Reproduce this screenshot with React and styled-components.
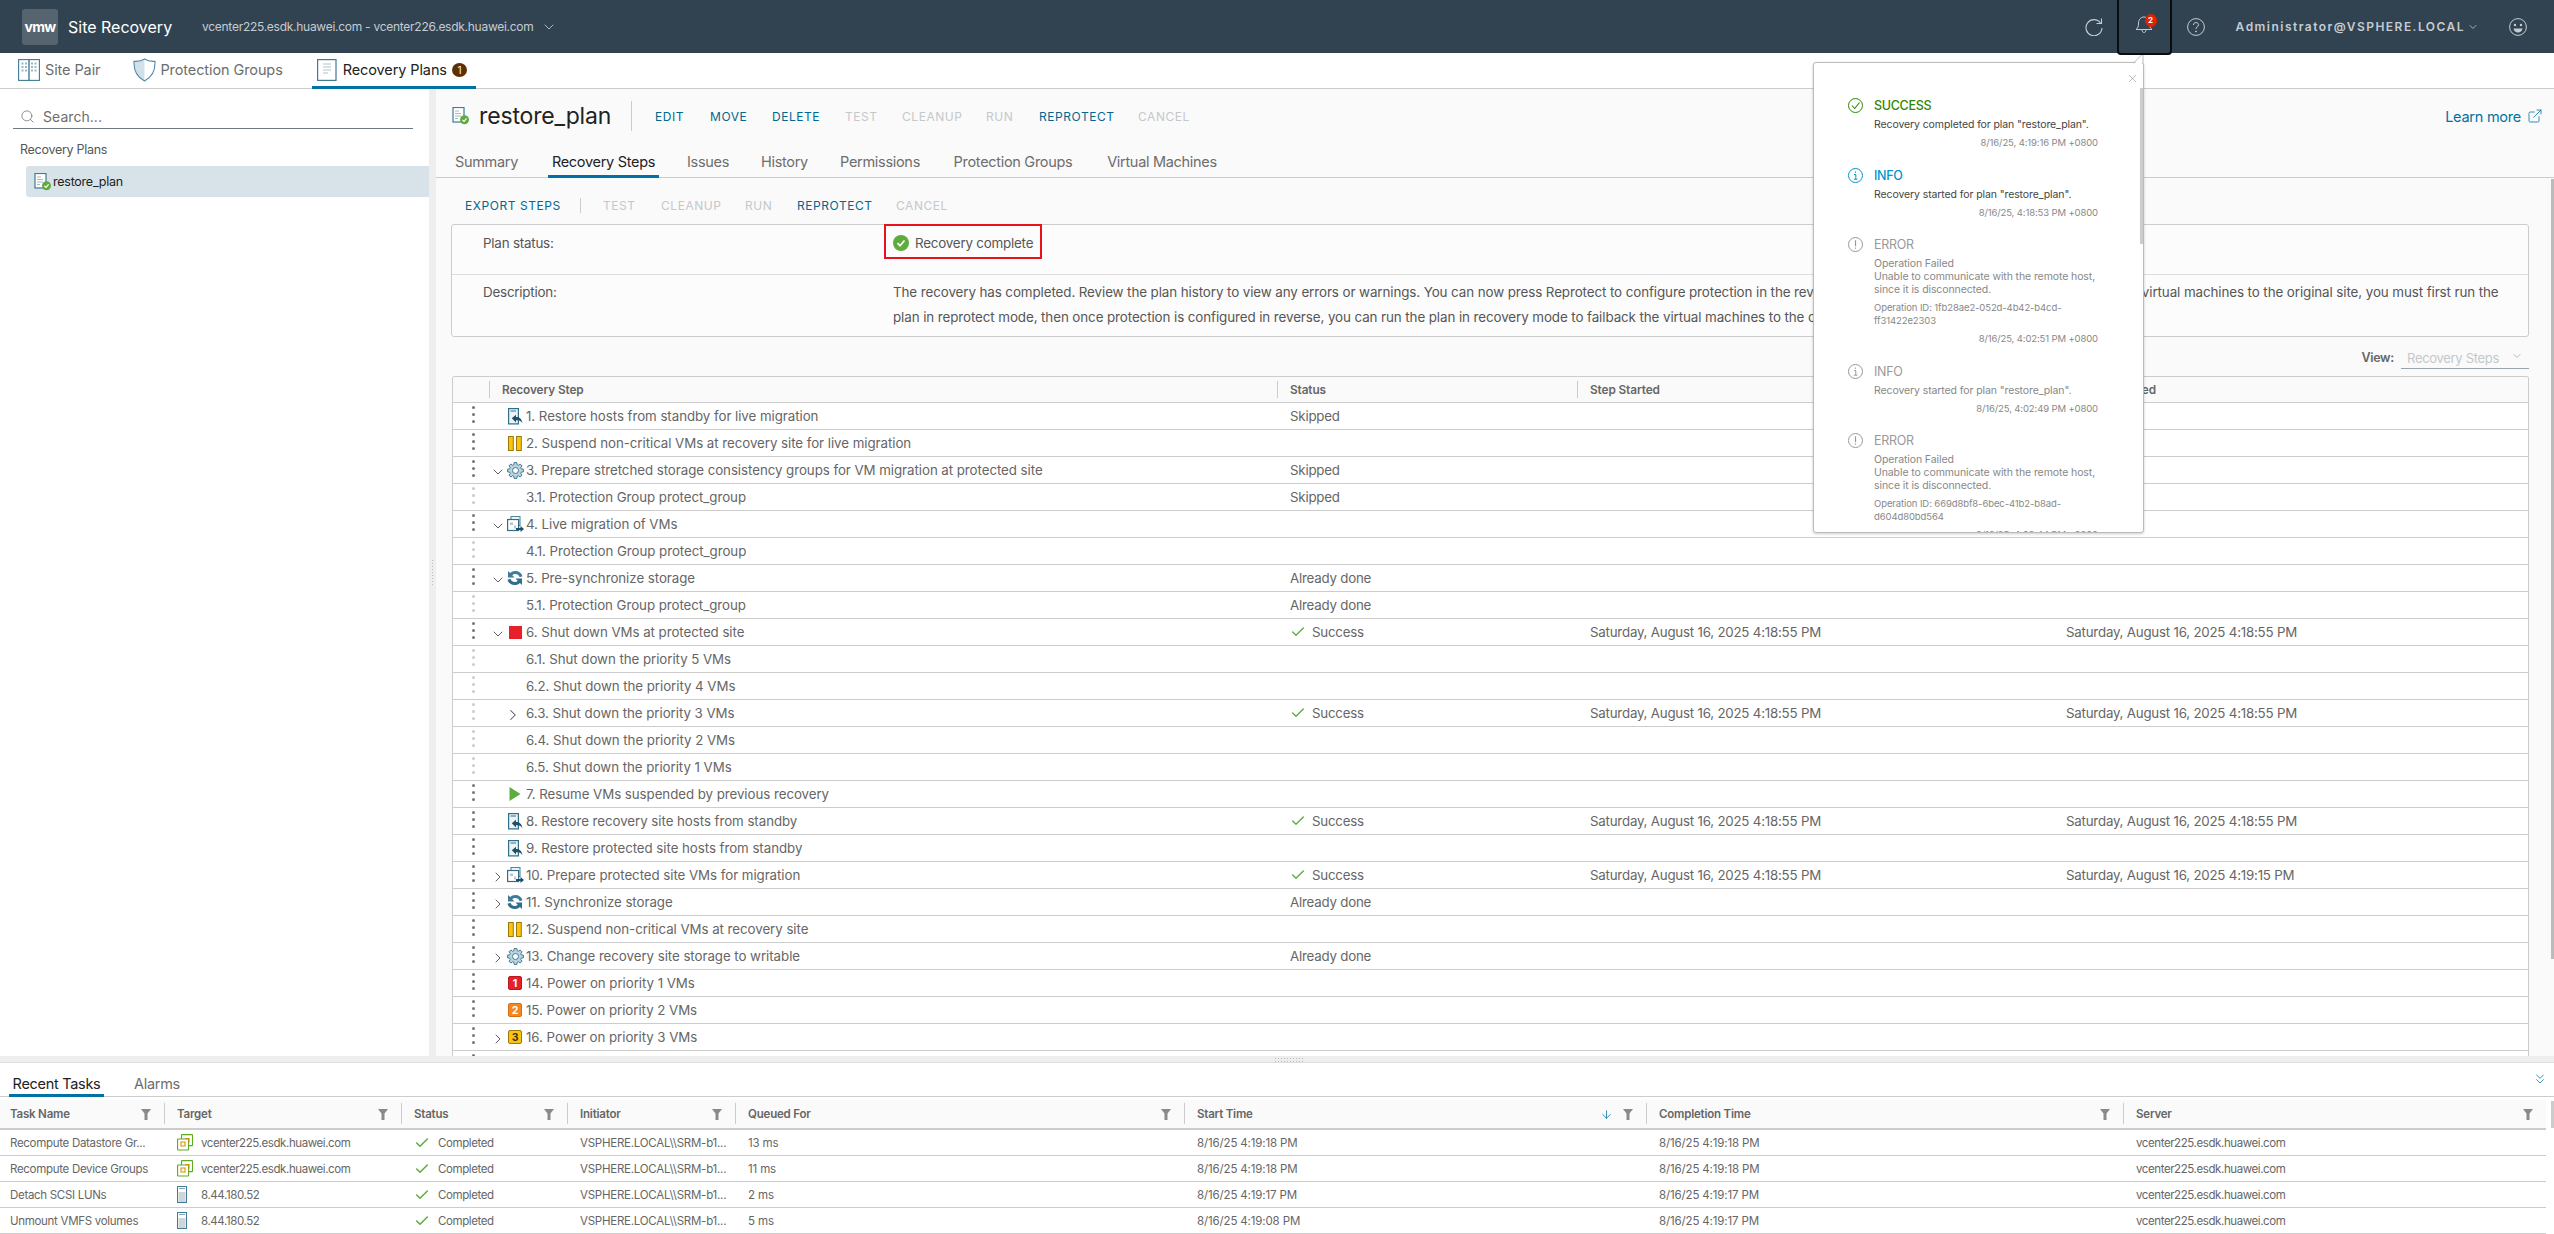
import React from 'react';
import styled, { createGlobalStyle } from 'styled-components';
import { ChevronDown, ChevronRight, Search, X, ExternalLink, Check, ArrowDown, ChevronsDown } from 'lucide-react';

const FONT = '"Inter", "Noto Sans", "Liberation Sans", sans-serif';

const Global = createGlobalStyle`
  html, body { margin: 0; padding: 0; background: #fff; }
  body { font-family: ${FONT}; color: #565656; }
  * { box-sizing: border-box; }
`;

const Page = styled.div`
  position: relative;
  width: 2554px;
  height: 1234px;
  display: flex;
  flex-direction: column;
  overflow: hidden;
  background: #fff;
`;

/* Header */
const Header = styled.header`
  height: 53px;
  flex: none;
  background: #314351;
  display: flex;
  align-items: center;
  padding-left: 22px;
`;
const Logo = styled.div`
  width: 36px;
  height: 36px;
  border-radius: 3px;
  background: #56646f;
  color: #fff;
  font-size: 14px;
  font-weight: 700;
  letter-spacing: -0.7px;
  display: flex;
  align-items: center;
  justify-content: center;
`;
const Brand = styled.div`
  margin-left: 10px;
  width: 107px;
  white-space: nowrap;
  color: #fff;
  font-size: 16px;
  letter-spacing: 0;
`;
const Context = styled.div`
  margin-left: 27px;
  color: #c5ccd1;
  font-size: 12px;
  letter-spacing: -0.27px;
  display: flex;
  align-items: center;
  gap: 7px;
`;
const HeaderRight = styled.div`
  margin-left: auto;
  display: flex;
  align-items: center;
  height: 100%;
`;
const HeaderIcon = styled.div`
  width: 18px;
  height: 18px;
  color: #c5ccd1;
  display: flex;
  margin-left: ${p => p.$ml || 0}px;
  margin-right: ${p => p.$mr || 0}px;
`;
const BellBox = styled.div`
  position: relative;
  z-index: 6;
  width: 55px;
  height: 57px;
  margin: -2px 0 -2px 14px;
  align-self: flex-start;
  border: 2px solid #0c0c0c;
  border-radius: 0 0 4px 4px;
  display: flex;
  justify-content: center;
  padding-top: 14px;
  color: #c5ccd1;
`;
const BellBadge = styled.span`
  position: absolute;
  left: 26px;
  top: 14px;
  width: 12px;
  height: 13px;
  border-radius: 50%;
  background: #e12200;
  color: #fff;
  font-size: 8px;
  font-weight: 700;
  line-height: 13px;
  text-align: center;
`;
const UserName = styled.div`
  margin-left: 31px;
  color: #c5ccd1;
  font-size: 12px;
  font-weight: 600;
  letter-spacing: 1.47px;
`;
const UserCaret = styled.div`
  margin-left: 2px;
  display: flex;
  color: #c5ccd1;
`;

/* Top nav */
const Nav = styled.nav`
  height: 36px;
  flex: none;
  display: flex;
  border-bottom: 1px solid #ccc;
  padding-left: 18px;
  align-items: stretch;
`;
const NavItem = styled.div`
  display: flex;
  align-items: center;
  gap: ${p => p.$gap || 5}px;
  height: 36px;
  margin-left: ${p => p.$ml || 0}px;
  padding: ${p => (p.$active ? '0 9px 0 5px' : '0')};
  font-size: 14.5px;
  white-space: nowrap;
  letter-spacing: -0.1px;
  color: ${p => (p.$active ? '#222' : '#6d6d6d')};
  border-bottom: 3px solid ${p => (p.$active ? '#0072a3' : 'transparent')};
`;
const CountBadge = styled.span`
  width: 15px;
  height: 14px;
  border-radius: 50%;
  background: #5d3006;
  color: #fff;
  font-size: 10px;
  line-height: 14px;
  text-align: center;
  margin-left: -1px;
`;

/* Work area */
const Work = styled.div`
  flex: 1;
  min-height: 0;
  display: flex;
`;
const Side = styled.aside`
  width: 429px;
  flex: none;
  padding-top: 17px;
`;
const SearchBox = styled.div`
  margin: 0 16px 0 13px;
  height: 23px;
  display: flex;
  align-items: center;
  gap: 8px;
  padding: 0 0 2px 7px;
  border-bottom: 1px solid #6f7a80;
  color: #6d6d6d;
  font-size: 14px;
  letter-spacing: 0.05px;
`;
const SideHeading = styled.div`
  margin: 13px 0 0 20px;
  font-size: 12.5px;
  letter-spacing: -0.28px;
  color: #565656;
  height: 15px;
  line-height: 15px;
`;
const SideRow = styled.div`
  margin: 9px 0 0 26px;
  height: 31px;
  background: #d8e3e9;
  border-radius: 3px 0 0 3px;
  display: flex;
  align-items: center;
  padding-left: 8px;
  gap: 1px;
  font-size: 12.5px;
  letter-spacing: -0.25px;
  color: #222;
`;
const Gutter = styled.div`
  width: 7px;
  flex: none;
  background: #eee;
  display: flex;
  align-items: center;
  justify-content: center;
`;
const GripV = styled.div`
  width: 3px;
  height: 28px;
  background-image: radial-gradient(#bbb 0.8px, transparent 0.9px);
  background-size: 3px 3px;
`;
const Main = styled.main`
  flex: 1;
  min-width: 0;
  background: #fafafa;
  position: relative;
  overflow: hidden;
  display: flex;
  flex-direction: column;
`;
const MainThumb = styled.div`
  position: absolute;
  right: 0;
  top: 90px;
  width: 3px;
  height: 780px;
  background: #bbb;
`;
const TitleRow = styled.div`
  height: 54px;
  flex: none;
  display: flex;
  align-items: center;
  padding-left: 16px;
`;
const Title = styled.h1`
  margin: 0 0 0 9px;
  width: 131px;
  white-space: nowrap;
  font-size: 23px;
  font-weight: 400;
  color: #222;
  letter-spacing: -0.15px;
`;
const Divider = styled.div`
  width: 1px;
  height: ${p => p.$h || 30}px;
  background: #ccc;
  margin: 0 ${p => p.$r || 23}px 0 ${p => p.$l || 21}px;
`;
const ActionBar = styled.div`
  display: flex;
  align-items: center;
`;
const Action = styled.span`
  font-size: 12px;
  font-weight: 400;
  letter-spacing: 0.55px;
  width: ${p => p.$w}px;
  white-space: nowrap;
  margin-right: ${p => p.$r}px;
  color: ${p => (p.$off ? '#c4c8ca' : '#00688f')};
`;
const LearnMore = styled.div`
  margin-left: auto;
  margin-right: 11px;
  display: flex;
  align-items: center;
  gap: 6px;
  color: #0072a3;
  font-size: 14.5px;
  letter-spacing: -0.25px;
`;
const Tabs = styled.div`
  height: 35px;
  flex: none;
  display: flex;
  border-bottom: 1px solid #ccc;
  padding-left: 19px;
`;
const Tab = styled.div`
  height: 35px;
  display: flex;
  align-items: center;
  justify-content: center;
  padding-top: 4px;
  width: ${p => p.$w}px;
  margin-right: ${p => p.$r}px;
  font-size: 14.5px;
  white-space: nowrap;
  letter-spacing: -0.3px;
  color: ${p => (p.$active ? '#222' : '#6d6d6d')};
  border-bottom: 3px solid ${p => (p.$active ? '#0072a3' : 'transparent')};
`;
const Toolbar = styled.div`
  height: 46px;
  flex: none;
  padding: 8px 0 0 29px;
  display: flex;
  align-items: center;
`;
const InfoBox = styled.section`
  flex: none;
  margin: 0 25px 0 15px;
  height: 113px;
  border: 1px solid #ccc;
  border-radius: 3px;
  background: #fcfcfc;
`;
const InfoRow = styled.div`
  display: grid;
  grid-template-columns: 410px 1fr;
  padding-left: 31px;
  height: ${p => p.$h}px;
  border-bottom: ${p => (p.$line ? '1px solid #ddd' : 'none')};
  font-size: 13.4px;
  letter-spacing: -0.22px;
  line-height: 25px;
  color: #565656;
`;
const InfoLabel = styled.div`
  padding-top: ${p => p.$t}px;
`;
const DescText = styled.div`
  padding-top: 5px;
  letter-spacing: -0.1px;
  white-space: nowrap;
`;
const StatusBox = styled.div`
  margin: -1px 0 0 -9px;
  width: 158px;
  height: 35px;
  border: 2px solid #e8121d;
  display: flex;
  align-items: center;
  gap: 6px;
  padding: 3px 0 0 7px;
  white-space: nowrap;
  color: #565656;
`;
const ViewRow = styled.div`
  height: 39px;
  flex: none;
  display: flex;
  justify-content: flex-end;
  padding-right: 25px;
  padding-top: 13px;
`;
const ViewLabel = styled.span`
  font-size: 12.5px;
  font-weight: 600;
  letter-spacing: -0.3px;
  color: #666;
  margin-right: 7px;
`;
const ViewSelect = styled.div`
  width: 128px;
  height: 19px;
  padding-left: 6px;
  border-bottom: 1px solid #9aa5ab;
  display: flex;
  justify-content: space-between;
  padding-right: 6px;
  font-size: 13px;
  letter-spacing: -0.3px;
  color: #c4c8ca;
`;

/* Steps table */
const StepsTable = styled.div`
  flex: 1;
  min-height: 0;
  overflow: hidden;
  margin: 0 25px 0 16px;
  border: 1px solid #ccc;
  border-bottom: none;
  border-radius: 3px 3px 0 0;
  background: #fff;
`;
const STEP_COLS = '36px 788px 300px 476px 1fr';
const StepHead = styled.div`
  display: grid;
  grid-template-columns: ${STEP_COLS};
  height: 26px;
  background: #fafafa;
  border-bottom: 1px solid #ccc;
  font-size: 11.8px;
  font-weight: 600;
  letter-spacing: -0.1px;
  color: #666;
`;
const HeadCell = styled.div`
  display: flex;
  align-items: center;
  padding-left: 13px;
  position: relative;
  &::before {
    content: '';
    display: ${p => (p.$first ? 'none' : 'block')};
    position: absolute;
    left: 0;
    top: 4px;
    bottom: 4px;
    width: 1px;
    background: #ccc;
  }
`;
const StepRowBox = styled.div`
  display: grid;
  grid-template-columns: ${STEP_COLS};
  height: 27px;
  border-bottom: 1px solid #ccc;
  font-size: 13.3px;
  letter-spacing: -0.05px;
  color: #666;
`;
const Cell = styled.div`
  display: flex;
  align-items: center;
  padding-left: 13px;
  gap: 6px;
  white-space: nowrap;
  letter-spacing: -0.21px;
`;
const StepName = styled.div`
  display: flex;
  align-items: center;
  white-space: nowrap;
`;
const Dots = styled.div`
  padding: 3px 0 0 19px;
  display: flex;
  flex-direction: column;
  gap: 4px;
  span {
    width: 3px;
    height: 3px;
    border-radius: 50%;
    background: ${p => (p.$sub ? '#ccc' : '#777')};
  }
`;
const Toggle = styled.div`
  width: 16px;
  flex: none;
  margin-left: 1px;
  display: flex;
  align-items: center;
  justify-content: center;
  padding-top: 4px;
  color: #555;
`;
const IconSlot = styled.div`
  width: 18px;
  height: 20px;
  flex: none;
  display: flex;
  align-items: center;
  justify-content: center;
  margin-right: 2px;
`;
const SubToggle = styled.div`
  width: 18px;
  height: 20px;
  flex: none;
  margin: 0 4px 0 -2px;
  display: flex;
  align-items: center;
  justify-content: center;
  padding-top: 3px;
  color: #555;
`;

/* Splitter */
const HSplit = styled.div`
  height: 7px;
  flex: none;
  background: #eee;
  border-bottom: 1px solid #ddd;
  display: flex;
  justify-content: center;
  align-items: center;
  padding-left: 23px;
`;
const GripH = styled.div`
  width: 30px;
  height: 5px;
  background-image: radial-gradient(#bbb 0.8px, transparent 0.9px);
  background-size: 3px 3px;
`;

/* Bottom */
const Bottom = styled.section`
  height: 171px;
  flex: none;
  display: flex;
  flex-direction: column;
`;
const BottomTabs = styled.div`
  height: 34px;
  flex: none;
  display: flex;
  padding-left: 9px;
  border-bottom: 1px solid #ccc;
  position: relative;
`;
const CollapseBtn = styled.div`
  position: absolute;
  right: 6px;
  top: 8px;
  color: #0079b8;
`;
const BottomTab = styled.div`
  height: 34px;
  width: ${p => p.$w}px;
  margin-right: ${p => p.$r || 0}px;
  padding-top: 9px;
  display: flex;
  align-items: center;
  justify-content: center;
  white-space: nowrap;
  font-size: 14.5px;
  letter-spacing: -0.3px;
  color: ${p => (p.$active ? '#222' : '#6d6d6d')};
  border-bottom: 3px solid ${p => (p.$active ? '#0072a3' : 'transparent')};
`;
const TASK_COLS = '164px 237px 166px 168px 449px 462px 477px 1fr';
const TaskHead = styled.div`
  display: grid;
  grid-template-columns: ${TASK_COLS};
  margin-top: 3px;
  height: 30px;
  width: 2546px;
  background: #fafafa;
  border-bottom: 2px solid #ccc;
  font-size: 11.5px;
  font-weight: 600;
  letter-spacing: -0.2px;
  color: #666;
`;
const TaskHeadCell = styled.div`
  position: relative;
  display: flex;
  align-items: center;
  padding: 0 13px 0 ${p => (p.$first ? 10 : 13)}px;
  justify-content: space-between;
  gap: 4px;
  &::before {
    content: '';
    display: ${p => (p.$first ? 'none' : 'block')};
    position: absolute;
    left: 0;
    top: 3px;
    bottom: 4px;
    width: 1px;
    background: #ccc;
  }
`;
const HeadTools = styled.div`
  display: flex;
  align-items: center;
  gap: 10px;
`;
const TaskRowBox = styled.div`
  display: grid;
  grid-template-columns: ${TASK_COLS};
  height: 26px;
  width: 2546px;
  border-bottom: 1px solid #ccc;
  font-size: 11.5px;
  color: #666;
`;
const TaskCell = styled.div`
  display: flex;
  align-items: center;
  padding-left: ${p => (p.$first ? 10 : 13)}px;
  gap: 8px;
  white-space: nowrap;
  letter-spacing: ${p => p.$ls ?? -0.14}px;
`;
const HostSlot = styled.span`
  width: 16px;
  display: flex;
`;
const ThumbTop = styled.div`
  position: absolute;
  right: 0;
  bottom: 106px;
  width: 3px;
  height: 27px;
  background: #ccc;
`;

/* Notifications popover */
const Popover = styled.div`
  position: absolute;
  z-index: 5;
  left: 1813px;
  top: 62px;
  width: 331px;
  height: 471px;
  background: #fff;
  border: 1px solid #bbb;
  border-radius: 3px;
  box-shadow: 0 1px 3px rgba(0,0,0,.2);
  &::before {
    content: '';
    position: absolute;
    right: -1px;
    top: -9px;
    width: 0;
    height: 0;
    border-left: 9px solid transparent;
    border-bottom: 9px solid #fff;
  }
`;
const PopArrow = styled.svg`
  position: absolute;
  right: -1px;
  top: -10px;
`;
const CloseBtn = styled.div`
  position: absolute;
  right: 4px;
  top: 9px;
  color: #888;
  display: flex;
`;
const PopScrollThumb = styled.div`
  position: absolute;
  right: 0;
  top: 25px;
  width: 3px;
  height: 156px;
  background: #ccc;
`;
const PopList = styled.div`
  height: 100%;
  overflow: hidden;
  padding: 34px 45px 0 34px;
`;
const Note = styled.div`
  display: grid;
  grid-template-columns: 26px 1fr;
  margin-bottom: 17.5px;
  color: ${p => (p.$muted ? '#888' : '#444')};
`;
const NoteIcon = styled.div`
  display: flex;
  padding-top: 1px;
`;
const NoteTitle = styled.div`
  font-size: 12.5px;
  line-height: 18px;
  font-weight: ${p => (p.$muted ? 400 : 500)};
  letter-spacing: -0.3px;
  color: ${p => p.$color};
`;
const NoteBody = styled.div`
  grid-column: 2;
  font-size: 10.5px;
  line-height: 13px;
  letter-spacing: -0.1px;
  margin-top: 3px;
`;
const NoteMeta = styled.div`
  grid-column: 2;
  font-size: 9.5px;
  line-height: 13px;
  margin-top: 5px;
  letter-spacing: -0.1px;
  color: #888;
`;
const NoteTime = styled.div`
  grid-column: 2;
  text-align: right;
  margin-top: 5px;
  font-size: 9.5px;
  line-height: 13px;
  letter-spacing: -0.12px;
  color: #888;
`;

/* Icons */
const PlanIcon = () => (
  <svg width="18" height="18" viewBox="0 0 18 18" fill="none">
    <rect x="1" y="0.5" width="11" height="14.5" fill="#fff" stroke="#3f7a96" strokeWidth="1.2" />
    <path d="M3 4h4M3 6.5h6M3 9h6M3 11.5h3" stroke="#aab7bf" strokeWidth="1" />
    <circle cx="12.5" cy="12.8" r="4.5" fill="#5eab3e" />
    <path d="M10.4 12.8l1.6 1.6 2.6-3" stroke="#fff" strokeWidth="1.2" fill="none" />
  </svg>
);
const SitePairIcon = () => (
  <svg width="22" height="22" viewBox="0 0 22 22" fill="none">
    <rect x="0.6" y="0.6" width="20.8" height="20.8" stroke="#3f7a96" strokeWidth="1.1" />
    <path d="M11 0.6v20.8" stroke="#3f7a96" strokeWidth="1.4" />
    <path d="M3.5 3.500h2v2h-2zM7 3.500h2v2H7zM3.500 7h2v2h-2zM7 7h2v2H7zM3.500 10.500h2v2h-2zM7 10.500h2v2H7zM13 3.500h2v2h-2zM16.500 3.500h2v2h-2zM13 7h2v2h-2zM16.500 7h2v2h-2zM13 10.500h2v2h-2zM16.500 10.500h2v2h-2z" fill="#9db7c5" />
  </svg>
);
const ShieldIcon = () => (
  <svg width="23" height="24" viewBox="0 0 23 24" fill="none">
    <path d="M11.500 1.500C8.500 3.500 4.500 4 1.500 3.800 1 12 4 19 11.500 22.800z" fill="#d2e1e8" />
    <path d="M11.500 1C8.500 3 4.500 3.600 1 3.300.6 12 4 19.300 11.500 23 19 19.300 22.400 12 22 3.300 18.500 3.600 14.500 3 11.500 1z" stroke="#4f8aa5" strokeWidth="1.1" />
  </svg>
);
const DocIcon = () => (
  <svg width="20" height="22" viewBox="0 0 20 22" fill="none">
    <rect x="0.6" y="0.6" width="18.400" height="20.800" stroke="#3f7a96" strokeWidth="1.2" />
    <path d="M6 5h8M6 8h8M6 11h8M6 14h5" stroke="#b5c3cb" strokeWidth="1" />
  </svg>
);
const RestoreIcon = () => (
  <svg width="15" height="17" viewBox="0 0 15 17" fill="none">
    <rect x="0.6" y="0.6" width="9.800" height="15.300" fill="#eef3f6" stroke="#2f6f8e" strokeWidth="1.200" />
    <path d="M2.500 3h5.500" stroke="#2f6f8e" strokeWidth="1" />
    <path d="M3.800 10.200L8 6.700v2.300c3.500 0 5.800 1.800 6.500 6.300-1.300-2.600-3.300-3.100-6.500-3.100v2.400z" fill="#1f4f69" />
  </svg>
);
const PauseIcon = () => (
  <svg width="14" height="15" viewBox="0 0 14 15">
    <rect x="0.500" y="0.500" width="4.800" height="14" fill="#fcc30b" stroke="#9a7a10" />
    <rect x="8.500" y="0.500" width="4.800" height="14" fill="#fcc30b" stroke="#9a7a10" />
  </svg>
);
const gearPath = () => {
  const pts = [];
  const teeth = 8;
  for (let i = 0; i < teeth; i++) {
    const a = (i / teeth) * Math.PI * 2;
    const step = (Math.PI * 2) / teeth;
    [[-0.32, 6], [-0.2, 8], [0.2, 8], [0.32, 6]].forEach(([f, r]) => {
      const t = a + f * step * 1.1;
      pts.push(`${(8.5 + r * Math.cos(t)).toFixed(2)} ${(8.5 + r * Math.sin(t)).toFixed(2)}`);
    });
  }
  return `M${pts.join('L')}Z`;
};
const GearIcon = () => (
  <svg width="17" height="17" viewBox="0 0 17 17" fill="none">
    <path d={gearPath()} fill="#bcd3df" stroke="#3f7a96" strokeWidth="1" strokeLinejoin="round" />
    <circle cx="8.500" cy="8.500" r="3" fill="#fff" stroke="#3f7a96" strokeWidth="1" />
  </svg>
);
const MigrateIcon = () => (
  <svg width="17" height="16" viewBox="0 0 17 16" fill="none">
    <rect x="4" y="0.600" width="9" height="9" fill="#fff" stroke="#3f7a96" strokeWidth="1" />
    <rect x="0.600" y="3.500" width="11" height="11" fill="#fff" stroke="#2f6f8e" strokeWidth="1.200" />
    <path d="M3 6.500h3v2.500H3zM7 9.500h2v3H7z" fill="#b5c7d2" />
    <path d="M9 12h4.500v-2l3.500 3-3.500 3v-2H9z" fill="#1f4f69" />
  </svg>
);
const SyncIcon = () => (
  <svg width="16" height="16" viewBox="0 0 16 16">
    <path d="M1 1V7.500H7.500L5.300 5.300C6 4.400 7 4 8.300 4 10.500 4 12 5.200 12.600 7.200L15.500 6.300C14.600 3 11.800 1 8.300 1 6.200 1 4.500 1.700 3.100 3.100Z" fill="#3f7a96" />
    <path d="M15 15V8.500H8.500L10.700 10.700C10 11.600 9 12 7.700 12 5.500 12 4 10.800 3.400 8.800L.5 9.700C1.400 13 4.200 15 7.700 15 9.800 15 11.500 14.300 12.900 12.900Z" fill="#2f6f8e" />
  </svg>
);
const StopIcon = () => (
  <svg width="13" height="13" viewBox="0 0 13 13"><rect width="13" height="13" fill="#e8202a" /></svg>
);
const PlayIcon = () => (
  <svg width="12" height="14" viewBox="0 0 12 14"><path d="M0.500 0L11.500 7 0.500 14z" fill="#5eab3e" /></svg>
);
const PrioIcon = ({ n, bg, fg, br }) => (
  <svg width="14" height="14" viewBox="0 0 14 14">
    <rect x="0.500" y="0.500" width="13" height="13" rx="1.500" fill={bg} stroke={br} />
    <text x="7" y="11" textAnchor="middle" fontSize="10.500" fontWeight="700" fontFamily="Inter, sans-serif" fill={fg}>{n}</text>
  </svg>
);
const BellIcon = () => (
  <svg width="18" height="19" viewBox="0 0 18 19" fill="none" stroke="currentColor" strokeWidth="1">
    <path d="M1 15.500c2-1.500 2.500-3 2.500-6.500 0-3.300 2.300-6 5.500-6s5.500 2.700 5.500 6c0 3.500.5 5 2.500 6.500z" />
    <path d="M7 15.500c0 2 .8 3 2 3s2-1 2-3" />
  </svg>
);
const RefreshIcon = () => (
  <svg width="18" height="18" viewBox="0 0 18 18" fill="none" stroke="currentColor" strokeWidth="1.100">
    <path d="M15.500 5A8 8 0 1 0 17 10" />
    <path d="M16.500 0.500V5.500H11.500" />
  </svg>
);
const HelpIcon = () => (
  <svg width="18" height="18" viewBox="0 0 18 18" fill="none" stroke="currentColor" strokeWidth="1">
    <circle cx="9" cy="9" r="8.400" />
    <path d="M6.500 7c0-1.500 1.100-2.500 2.500-2.500s2.500 1 2.500 2.300c0 1.100-.7 1.600-1.400 2.200-.7.500-1.100 1-1.100 2" />
    <circle cx="9" cy="13.500" r=".5" fill="currentColor" />
  </svg>
);
const SmileIcon = () => (
  <svg width="18" height="18" viewBox="0 0 18 18" fill="none" stroke="currentColor" strokeWidth="1">
    <circle cx="9" cy="9" r="8.400" />
    <circle cx="6" cy="7" r="1.200" fill="currentColor" stroke="none" />
    <circle cx="12" cy="7" r="1.200" fill="currentColor" stroke="none" />
    <path d="M4.500 10.500h9c-.4 2.500-2.200 4-4.500 4s-4.100-1.500-4.500-4z" fill="currentColor" stroke="none" />
  </svg>
);
const GreenCheckDisc = () => (
  <svg width="16" height="16" viewBox="0 0 16 16">
    <circle cx="8" cy="8" r="8" fill="#5eab3e" />
    <path d="M4.500 8.200l2.500 2.600 4.500-5.300" stroke="#fff" strokeWidth="1.700" fill="none" />
  </svg>
);
const RoundMark = ({ color, kind }) => (
  <svg width="15" height="15" viewBox="0 0 15 15" fill="none" stroke={color} strokeWidth="1">
    <circle cx="7.500" cy="7.500" r="7" />
    {kind === 'check' && <path d="M4 7.500l2.700 3L11.500 4.500" strokeWidth="1.100" />}
    {kind === 'info' && <path d="M6 6.500h1.800v4.500M5.800 11.200h3.600M7.500 3.500v1.300" />}
    {kind === 'error' && <path d="M7.500 3.200v6M7.500 10.500v1.300" strokeWidth="1.200" />}
  </svg>
);
const FilterIcon = () => (
  <svg width="10" height="11" viewBox="0 0 10 11"><path d="M0 0h10L6.500 4.500V11h-3V4.500z" fill="#8a8a8a" /></svg>
);
const VcIcon = () => (
  <svg width="16" height="17" viewBox="0 0 16 17" fill="none">
    <rect x="4.500" y="0.600" width="11" height="11" stroke="#5eab1e" strokeWidth="1.100" rx=".5" />
    <rect x="0.600" y="5" width="11" height="11" fill="#fff" stroke="#5eab1e" strokeWidth="1.100" rx=".5" />
    <path d="M4 8h4v4H4zM8 4.500h4v4" stroke="#d79200" strokeWidth="1.100" />
  </svg>
);
const HostIcon = () => (
  <svg width="10" height="17" viewBox="0 0 10 17">
    <rect x="0.500" y="0.500" width="9" height="16" fill="#fff" stroke="#3f7a96" />
    <rect x="1.500" y="6" width="7" height="10" fill="#cfd6da" />
    <path d="M2 2.500h6" stroke="#8aa6b5" />
  </svg>
);

const STEP_ICONS = {
  restore: <RestoreIcon />,
  pause: <PauseIcon />,
  gear: <GearIcon />,
  migrate: <MigrateIcon />,
  sync: <SyncIcon />,
  stop: <StopIcon />,
  play: <PlayIcon />,
  p1: <PrioIcon n="1" bg="#e8202a" fg="#fff" br="#b51a22" />,
  p2: <PrioIcon n="2" bg="#f5871f" fg="#fff" br="#d57012" />,
  p3: <PrioIcon n="3" bg="#fcc30b" fg="#333" br="#9a7a10" />,
};

const D1 = 'Saturday, August 16, 2025 4:18:55 PM';
const STEPS = [
  { t: '1. Restore hosts from standby for live migration', i: 'restore', s: 'Skipped' },
  { t: '2. Suspend non-critical VMs at recovery site for live migration', i: 'pause' },
  { t: '3. Prepare stretched storage consistency groups for VM migration at protected site', i: 'gear', o: 'down', s: 'Skipped' },
  { t: '3.1. Protection Group protect_group', sub: 1, s: 'Skipped' },
  { t: '4. Live migration of VMs', i: 'migrate', o: 'down' },
  { t: '4.1. Protection Group protect_group', sub: 1 },
  { t: '5. Pre-synchronize storage', i: 'sync', o: 'down', s: 'Already done' },
  { t: '5.1. Protection Group protect_group', sub: 1, s: 'Already done' },
  { t: '6. Shut down VMs at protected site', i: 'stop', o: 'down', s: 'Success', a: D1, b: D1 },
  { t: '6.1. Shut down the priority 5 VMs', sub: 1 },
  { t: '6.2. Shut down the priority 4 VMs', sub: 1 },
  { t: '6.3. Shut down the priority 3 VMs', sub: 1, subOpen: 1, s: 'Success', a: D1, b: D1 },
  { t: '6.4. Shut down the priority 2 VMs', sub: 1 },
  { t: '6.5. Shut down the priority 1 VMs', sub: 1 },
  { t: '7. Resume VMs suspended by previous recovery', i: 'play' },
  { t: '8. Restore recovery site hosts from standby', i: 'restore', s: 'Success', a: D1, b: D1 },
  { t: '9. Restore protected site hosts from standby', i: 'restore' },
  { t: '10. Prepare protected site VMs for migration', i: 'migrate', o: 'right', s: 'Success', a: D1, b: 'Saturday, August 16, 2025 4:19:15 PM' },
  { t: '11. Synchronize storage', i: 'sync', o: 'right', s: 'Already done' },
  { t: '12. Suspend non-critical VMs at recovery site', i: 'pause' },
  { t: '13. Change recovery site storage to writable', i: 'gear', o: 'right', s: 'Already done' },
  { t: '14. Power on priority 1 VMs', i: 'p1' },
  { t: '15. Power on priority 2 VMs', i: 'p2' },
  { t: '16. Power on priority 3 VMs', i: 'p3', o: 'right' },
  { t: '', i: null },
];

const TASKS = [
  { n: 'Recompute Datastore Gr...', tg: 'vcenter225.esdk.huawei.com', k: 'vc', q: '13 ms', st: '8/16/25 4:19:18 PM', c: '8/16/25 4:19:18 PM' },
  { n: 'Recompute Device Groups', tg: 'vcenter225.esdk.huawei.com', k: 'vc', q: '11 ms', st: '8/16/25 4:19:18 PM', c: '8/16/25 4:19:18 PM' },
  { n: 'Detach SCSI LUNs', tg: '8.44.180.52', k: 'host', q: '2 ms', st: '8/16/25 4:19:17 PM', c: '8/16/25 4:19:17 PM' },
  { n: 'Unmount VMFS volumes', tg: '8.44.180.52', k: 'host', q: '5 ms', st: '8/16/25 4:19:08 PM', c: '8/16/25 4:19:17 PM' },
];

const StepRow = ({ step }) => (
  <StepRowBox>
    <Dots $sub={step.sub}><span /><span /><span /></Dots>
    <StepName>
      <Toggle>
        {step.o === 'down' && <ChevronDown size={22} strokeWidth={1.4} />}
        {step.o === 'right' && <ChevronRight size={22} strokeWidth={1.4} />}
      </Toggle>
      {step.subOpen ? (
        <SubToggle><ChevronRight size={22} strokeWidth={1.4} /></SubToggle>
      ) : (
        <IconSlot>{STEP_ICONS[step.i]}</IconSlot>
      )}
      {step.t}
    </StepName>
    <Cell>
      {step.s === 'Success' && <Check size={16} strokeWidth={2} color="#5eab3e" />}
      {step.s}
    </Cell>
    <Cell>{step.a}</Cell>
    <Cell>{step.b}</Cell>
  </StepRowBox>
);

const TaskHeader = ({ label, first, sort }) => (
  <TaskHeadCell $first={first}>
    {label}
    <HeadTools>
      {sort && <ArrowDown size={13} strokeWidth={1.4} color="#0072a3" />}
      <FilterIcon />
    </HeadTools>
  </TaskHeadCell>
);

const TITLE_GREEN = '#318700';
const TITLE_BLUE = '#0095d3';

export default function App() {
  return (
    <Page>
      <Global />
      <Header>
        <Logo>vmw</Logo>
        <Brand>Site Recovery</Brand>
        <Context>
          vcenter225.esdk.huawei.com - vcenter226.esdk.huawei.com
          <ChevronDown size={16} strokeWidth={1.3} />
        </Context>
        <HeaderRight>
          <HeaderIcon><RefreshIcon /></HeaderIcon>
          <BellBox>
            <BellIcon />
            <BellBadge>2</BellBadge>
          </BellBox>
          <HeaderIcon $ml={15}><HelpIcon /></HeaderIcon>
          <UserName>Administrator@VSPHERE.LOCAL</UserName>
          <UserCaret><ChevronDown size={12} strokeWidth={1.5} /></UserCaret>
          <HeaderIcon $ml={30} $mr={27}><SmileIcon /></HeaderIcon>
        </HeaderRight>
      </Header>
      <Nav>
        <NavItem><SitePairIcon />Site Pair</NavItem>
        <NavItem $ml={33} $gap={4}><ShieldIcon />Protection Groups</NavItem>
        <NavItem $ml={29} $active $gap={6}><DocIcon />Recovery Plans<CountBadge>1</CountBadge></NavItem>
      </Nav>
      <Work>
        <Side>
          <SearchBox><Search size={15} strokeWidth={1.2} />Search...</SearchBox>
          <SideHeading>Recovery Plans</SideHeading>
          <SideRow><PlanIcon />restore_plan</SideRow>
        </Side>
        <Gutter><GripV /></Gutter>
        <Main>
          <TitleRow>
            <PlanIcon />
            <Title>restore_plan</Title>
            <Divider />
            <ActionBar>
              <Action $w={27} $r={28}>EDIT</Action>
              <Action $w={35} $r={27}>MOVE</Action>
              <Action $w={47} $r={26}>DELETE</Action>
              <Action $off $w={30} $r={27}>TEST</Action>
              <Action $off $w={58} $r={26}>CLEANUP</Action>
              <Action $off $w={25} $r={28}>RUN</Action>
              <Action $w={72} $r={27}>REPROTECT</Action>
              <Action $off $w={49} $r={0}>CANCEL</Action>
            </ActionBar>
            <LearnMore>Learn more <ExternalLink size={16} strokeWidth={1.2} /></LearnMore>
          </TitleRow>
          <Tabs>
            <Tab $w={63} $r={30}>Summary</Tab>
            <Tab $w={111} $r={29} $active>Recovery Steps</Tab>
            <Tab $w={40} $r={33}>Issues</Tab>
            <Tab $w={47} $r={33}>History</Tab>
            <Tab $w={78} $r={33}>Permissions</Tab>
            <Tab $w={122} $r={33}>Protection Groups</Tab>
            <Tab $w={110} $r={0}>Virtual Machines</Tab>
          </Tabs>
          <Toolbar>
            <Action $w={91} $r={0}>EXPORT STEPS</Action>
            <Divider $h={15} $l={24} $r={22} />
            <Action $off $w={30} $r={28}>TEST</Action>
            <Action $off $w={58} $r={26}>CLEANUP</Action>
            <Action $off $w={25} $r={27}>RUN</Action>
            <Action $w={73} $r={26}>REPROTECT</Action>
            <Action $off $w={49} $r={0}>CANCEL</Action>
          </Toolbar>
          <InfoBox>
            <InfoRow $h={50} $line>
              <InfoLabel $t={6}>Plan status:</InfoLabel>
              <StatusBox><GreenCheckDisc />Recovery complete</StatusBox>
            </InfoRow>
            <InfoRow $h={60}>
              <InfoLabel $t={5}>Description:</InfoLabel>
              <DescText>
                The recovery has completed. Review the plan history to view any errors or warnings. You can now press Reprotect to configure protection in the reverse direction. If you need to fail back the recovered virtual machines to the original site, you must first run the<br />
                plan in reprotect mode, then once protection is configured in reverse, you can run the plan in recovery mode to failback the virtual machines to the original site.
              </DescText>
            </InfoRow>
          </InfoBox>
          <ViewRow>
            <ViewLabel>View:</ViewLabel>
            <ViewSelect>Recovery Steps <ChevronDown size={12} strokeWidth={1.4} color="#999" /></ViewSelect>
          </ViewRow>
          <StepsTable>
            <StepHead>
              <HeadCell $first />
              <HeadCell>Recovery Step</HeadCell>
              <HeadCell>Status</HeadCell>
              <HeadCell>Step Started</HeadCell>
              <HeadCell>Step Completed</HeadCell>
            </StepHead>
            {STEPS.map((s, i) => <StepRow key={i} step={s} />)}
          </StepsTable>
          <MainThumb />
        </Main>
      </Work>
      <HSplit><GripH /></HSplit>
      <Bottom>
        <BottomTabs>
          <BottomTab $active $w={95} $r={30}>Recent Tasks</BottomTab>
          <BottomTab $w={46}>Alarms</BottomTab>
          <CollapseBtn><ChevronsDown size={16} strokeWidth={1.2} /></CollapseBtn>
        </BottomTabs>
        <TaskHead>
          <TaskHeader first label="Task Name" />
          <TaskHeader label="Target" />
          <TaskHeader label="Status" />
          <TaskHeader label="Initiator" />
          <TaskHeader label="Queued For" />
          <TaskHeader label="Start Time" sort />
          <TaskHeader label="Completion Time" />
          <TaskHeader label="Server" />
        </TaskHead>
        {TASKS.map((t) => (
          <TaskRowBox key={t.n}>
            <TaskCell $first $ls={-0.3}>{t.n}</TaskCell>
            <TaskCell $ls={-0.41}>{t.k === 'vc' ? <VcIcon /> : <HostSlot><HostIcon /></HostSlot>}{t.tg}</TaskCell>
            <TaskCell $ls={-0.4}><Check size={16} strokeWidth={2.2} color="#5eab3e" />Completed</TaskCell>
            <TaskCell $ls={-0.24}>VSPHERE.LOCAL\\SRM-b1...</TaskCell>
            <TaskCell>{t.q}</TaskCell>
            <TaskCell>{t.st}</TaskCell>
            <TaskCell>{t.c}</TaskCell>
            <TaskCell $ls={-0.41}>vcenter225.esdk.huawei.com</TaskCell>
          </TaskRowBox>
        ))}
      </Bottom>
      <ThumbTop />
      <Popover>
        <PopArrow width="11" height="11" viewBox="0 0 11 11" fill="none"><path d="M0 10.500L10 0.500V10.500" stroke="#bbb" /></PopArrow>
        <CloseBtn><X size={13} strokeWidth={1} /></CloseBtn>
        <PopScrollThumb />
        <PopList>
          <Note>
            <NoteIcon><RoundMark color={TITLE_GREEN} kind="check" /></NoteIcon>
            <NoteTitle $color={TITLE_GREEN}>SUCCESS</NoteTitle>
            <NoteBody>Recovery completed for plan "restore_plan".</NoteBody>
            <NoteTime>8/16/25, 4:19:16 PM +0800</NoteTime>
          </Note>
          <Note>
            <NoteIcon><RoundMark color={TITLE_BLUE} kind="info" /></NoteIcon>
            <NoteTitle $color={TITLE_BLUE}>INFO</NoteTitle>
            <NoteBody>Recovery started for plan "restore_plan".</NoteBody>
            <NoteTime>8/16/25, 4:18:53 PM +0800</NoteTime>
          </Note>
          <Note $muted>
            <NoteIcon><RoundMark color="#999" kind="error" /></NoteIcon>
            <NoteTitle $muted $color="#999">ERROR</NoteTitle>
            <NoteBody>Operation Failed<br />Unable to communicate with the remote host,<br />since it is disconnected.</NoteBody>
            <NoteMeta>Operation ID: 1fb28ae2-052d-4b42-b4cd-<br />ff31422e2303</NoteMeta>
            <NoteTime>8/16/25, 4:02:51 PM +0800</NoteTime>
          </Note>
          <Note $muted>
            <NoteIcon><RoundMark color="#999" kind="info" /></NoteIcon>
            <NoteTitle $muted $color="#999">INFO</NoteTitle>
            <NoteBody>Recovery started for plan "restore_plan".</NoteBody>
            <NoteTime>8/16/25, 4:02:49 PM +0800</NoteTime>
          </Note>
          <Note $muted>
            <NoteIcon><RoundMark color="#999" kind="error" /></NoteIcon>
            <NoteTitle $muted $color="#999">ERROR</NoteTitle>
            <NoteBody>Operation Failed<br />Unable to communicate with the remote host,<br />since it is disconnected.</NoteBody>
            <NoteMeta>Operation ID: 669d8bf8-6bec-41b2-b8ad-<br />d604d80bd564</NoteMeta>
            <NoteTime>8/16/25, 4:02:44 PM +0800</NoteTime>
          </Note>
        </PopList>
      </Popover>
    </Page>
  );
}
